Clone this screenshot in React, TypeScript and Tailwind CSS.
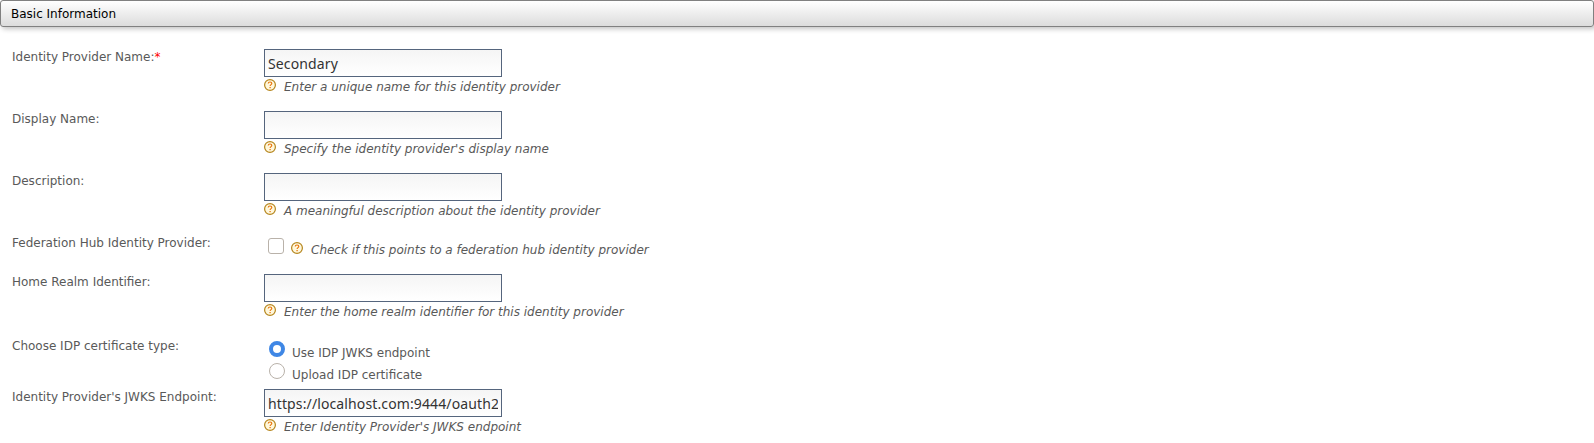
import type { ReactNode } from 'react';

function HelpIcon() {
  return (
    <svg width="12" height="12" viewBox="0 0 12 12" className="block shrink-0" aria-hidden="true">
      <circle cx="6" cy="6" r="5.4" fill="#fff8dc" stroke="#b5851c" strokeWidth="1.2" />
      <path d="M4.200 4.500C4.300 3.400 5 3 6 3c1.100 0 1.800.6 1.800 1.400C7.800 5.500 6.100 5.700 6.100 7.100" fill="none" stroke="#e8730c" strokeWidth="1.150" />
      <rect x="5.450" y="8" width="1.300" height="1.200" fill="#e8730c" />
    </svg>
  );
}

function Hint({ children }: { children: ReactNode }) {
  return (
    <div className="flex h-[14px] items-start gap-2">
      <HelpIcon />
      <span className="mt-px italic leading-[14px]">{children}</span>
    </div>
  );
}

function Row({ label, required, className, children }: { label: string; required?: boolean; className: string; children: ReactNode }) {
  return (
    <div className={`flex items-start pl-3 ${className}`}>
      <div className="w-[252px] shrink-0 pt-px leading-[14px]">
        {label}
        {required && <span className="text-[#ff0000]">*</span>}
      </div>
      <div>{children}</div>
    </div>
  );
}

function TextField({ label, value = '', hint, required, className }: { label: string; value?: string; hint: string; required?: boolean; className: string }) {
  return (
    <Row label={label} required={required} className={className}>
      <input
        aria-label={label}
        defaultValue={value}
        className="mb-[2px] block h-[28px] w-[238px] border border-[#55657d] bg-linear-to-b from-[#f5f5f5] to-white px-[3px] pt-px font-['Noto_Sans',sans-serif] text-[14px] tracking-[0.12px] text-[#333] outline-none"
      />
      <Hint>{hint}</Hint>
    </Row>
  );
}

function RadioOption({ label, selected }: { label: string; selected?: boolean }) {
  return (
    <label className="flex h-[22px] items-start gap-[7px] pl-[5px]">
      <input
        type="radio"
        name="certificate-type"
        defaultChecked={selected}
        className="block size-4 shrink-0 appearance-none rounded-full border border-[#b9b2aa] bg-white checked:border-[4px] checked:border-[#3f87e5]"
      />
      <span className="mt-[5px] leading-[14px]">{label}</span>
    </label>
  );
}

export default function App() {
  return (
    <main className="h-[443px] overflow-hidden bg-white font-['DejaVu_Sans',sans-serif] text-[12px] text-[#595959]">
      <h2 className="flex h-[27px] items-center rounded-[3px] border border-[#808080] bg-linear-to-b from-white to-[#dcdcdc] pl-[10px] leading-[14px] text-black shadow-[2px_2px_5px_rgba(0,0,0,0.24)]">
        Basic Information
      </h2>
      <form className="pt-[22px]">
        <TextField className="h-[62px]" label="Identity Provider Name:" required value="Secondary" hint="Enter a unique name for this identity provider" />
        <TextField className="h-[62px]" label="Display Name:" hint="Specify the identity provider's display name" />
        <TextField className="h-[62px]" label="Description:" hint="A meaningful description about the identity provider" />
        <Row className="h-[39px]" label="Federation Hub Identity Provider:">
          <div className="flex items-start gap-[7px] pl-1 pt-[3px]">
            <input type="checkbox" aria-label="Federation hub" className="block size-4 appearance-none rounded-[3px] border border-[#b9b2aa] bg-white" />
            <div className="pt-1">
              <Hint>Check if this points to a federation hub identity provider</Hint>
            </div>
          </div>
        </Row>
        <TextField className="h-[64px]" label="Home Realm Identifier:" hint="Enter the home realm identifier for this identity provider" />
        <Row className="h-[51px]" label="Choose IDP certificate type:">
          <div className="pt-[3px]">
            <RadioOption label="Use IDP JWKS endpoint" selected />
            <RadioOption label="Upload IDP certificate" />
          </div>
        </Row>
        <TextField
          className="h-[54px]"
          label="Identity Provider's JWKS Endpoint:"
          value="https://localhost.com:9444/oauth2/jwks"
          hint="Enter Identity Provider's JWKS endpoint"
        />
      </form>
    </main>
  );
}
